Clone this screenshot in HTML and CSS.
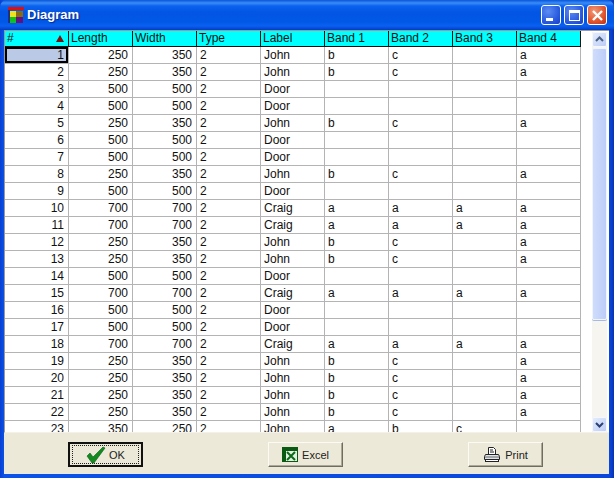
FILE: index.html
```html
<!DOCTYPE html>
<html lang="en">
<head>
<meta charset="utf-8">
<title>Diagram</title>
<link rel="stylesheet" href="styles.css">
</head>
<body>
<div class="window">
  <header class="titlebar">
    <svg class="app-icon" width="18" height="18" viewBox="0 0 18 18"><rect x="1" y="1" width="16" height="3" fill="#e01010"/><rect x="1" y="4" width="2" height="13" fill="#203080"/><rect x="3" y="5" width="6" height="6" fill="#f0e020"/><rect x="9" y="5" width="7" height="6" fill="#8a6a10"/><rect x="3" y="11" width="6" height="6" fill="#10c020"/><rect x="9" y="11" width="7" height="6" fill="#601080"/></svg>
    <span class="title">Diagram</span>
    <div class="caption-buttons">
      <span class="cap cap-blue"><svg width="19" height="19" viewBox="0 0 19 19"><rect x="4" y="12" width="7" height="3" fill="#fff"/></svg></span>
      <span class="cap cap-blue"><svg width="19" height="19" viewBox="0 0 19 19"><path d="M4 4h11v11H4z M5 7v7h9V7z" fill="#fff" fill-rule="evenodd"/></svg></span>
      <span class="cap cap-red"><svg width="19" height="19" viewBox="0 0 19 19"><path d="M5 5l9 9M14 5l-9 9" stroke="#fff" stroke-width="2.4" fill="none"/></svg></span>
    </div>
  </header>
  <div class="client">
    <div class="grid-area">
      <div class="table-clip">
        <table class="grid">
          <thead>
            <tr><th class="sorted"># <span class="sort-arrow"></span></th><th>Length</th><th>Width</th><th>Type</th><th>Label</th><th>Band 1</th><th>Band 2</th><th>Band 3</th><th>Band 4</th></tr>
          </thead>
          <tbody>
            <tr><td class="num selected">1</td><td class="num">250</td><td class="num">350</td><td>2</td><td>John</td><td>b</td><td>c</td><td></td><td>a</td></tr>
            <tr><td class="num">2</td><td class="num">250</td><td class="num">350</td><td>2</td><td>John</td><td>b</td><td>c</td><td></td><td>a</td></tr>
            <tr><td class="num">3</td><td class="num">500</td><td class="num">500</td><td>2</td><td>Door</td><td></td><td></td><td></td><td></td></tr>
            <tr><td class="num">4</td><td class="num">500</td><td class="num">500</td><td>2</td><td>Door</td><td></td><td></td><td></td><td></td></tr>
            <tr><td class="num">5</td><td class="num">250</td><td class="num">350</td><td>2</td><td>John</td><td>b</td><td>c</td><td></td><td>a</td></tr>
            <tr><td class="num">6</td><td class="num">500</td><td class="num">500</td><td>2</td><td>Door</td><td></td><td></td><td></td><td></td></tr>
            <tr><td class="num">7</td><td class="num">500</td><td class="num">500</td><td>2</td><td>Door</td><td></td><td></td><td></td><td></td></tr>
            <tr><td class="num">8</td><td class="num">250</td><td class="num">350</td><td>2</td><td>John</td><td>b</td><td>c</td><td></td><td>a</td></tr>
            <tr><td class="num">9</td><td class="num">500</td><td class="num">500</td><td>2</td><td>Door</td><td></td><td></td><td></td><td></td></tr>
            <tr><td class="num">10</td><td class="num">700</td><td class="num">700</td><td>2</td><td>Craig</td><td>a</td><td>a</td><td>a</td><td>a</td></tr>
            <tr><td class="num">11</td><td class="num">700</td><td class="num">700</td><td>2</td><td>Craig</td><td>a</td><td>a</td><td>a</td><td>a</td></tr>
            <tr><td class="num">12</td><td class="num">250</td><td class="num">350</td><td>2</td><td>John</td><td>b</td><td>c</td><td></td><td>a</td></tr>
            <tr><td class="num">13</td><td class="num">250</td><td class="num">350</td><td>2</td><td>John</td><td>b</td><td>c</td><td></td><td>a</td></tr>
            <tr><td class="num">14</td><td class="num">500</td><td class="num">500</td><td>2</td><td>Door</td><td></td><td></td><td></td><td></td></tr>
            <tr><td class="num">15</td><td class="num">700</td><td class="num">700</td><td>2</td><td>Craig</td><td>a</td><td>a</td><td>a</td><td>a</td></tr>
            <tr><td class="num">16</td><td class="num">500</td><td class="num">500</td><td>2</td><td>Door</td><td></td><td></td><td></td><td></td></tr>
            <tr><td class="num">17</td><td class="num">500</td><td class="num">500</td><td>2</td><td>Door</td><td></td><td></td><td></td><td></td></tr>
            <tr><td class="num">18</td><td class="num">700</td><td class="num">700</td><td>2</td><td>Craig</td><td>a</td><td>a</td><td>a</td><td>a</td></tr>
            <tr><td class="num">19</td><td class="num">250</td><td class="num">350</td><td>2</td><td>John</td><td>b</td><td>c</td><td></td><td>a</td></tr>
            <tr><td class="num">20</td><td class="num">250</td><td class="num">350</td><td>2</td><td>John</td><td>b</td><td>c</td><td></td><td>a</td></tr>
            <tr><td class="num">21</td><td class="num">250</td><td class="num">350</td><td>2</td><td>John</td><td>b</td><td>c</td><td></td><td>a</td></tr>
            <tr><td class="num">22</td><td class="num">250</td><td class="num">350</td><td>2</td><td>John</td><td>b</td><td>c</td><td></td><td>a</td></tr>
            <tr><td class="num">23</td><td class="num">350</td><td class="num">250</td><td>2</td><td>John</td><td>a</td><td>b</td><td>c</td><td></td></tr>
          </tbody>
        </table>
      </div>
      <div class="scrollbar">
        <div class="sb-btn"><svg width="15" height="15" viewBox="0 0 15 15"><path d="M4 9l3.5-3.5L11 9" stroke="#4d6185" stroke-width="2" fill="none"/></svg></div>
        <div class="sb-thumb"></div>
        <div class="sb-track"></div>
        <div class="sb-btn"><svg width="15" height="15" viewBox="0 0 15 15"><path d="M4 6l3.500 3.500L11 6" stroke="#2d4175" stroke-width="2" fill="none"/></svg></div>
      </div>
    </div>
    <footer class="footer">
      <button class="btn btn-default"><span class="focus-ring"><svg width="20" height="18" viewBox="0 0 20 18"><path d="M1 10l3-3 3 4L17 1l2 1L8 17H6z" fill="#138a20" stroke="#0b5a14" stroke-width=".6"/></svg><span>OK</span></span></button>
      <button class="btn"><svg width="16" height="15" viewBox="0 0 16 15"><rect x=".5" y=".5" width="15" height="14" fill="#e4f0e0" stroke="#0a5a14"/><rect x="1" y="1" width="14" height="3" fill="#0a5a14"/><rect x="1" y="1" width="3" height="13" fill="#0a5a14"/><path d="M5 5l8 8M13 5l-8 8" stroke="#0a6a18" stroke-width="2"/></svg><span>Excel</span></button>
      <button class="btn"><svg width="18" height="17" viewBox="0 0 18 17"><path d="M5.500 1.500h5l2 2v5h-7z" fill="#fff" stroke="#222"/><path d="M7 4h3M7 6h4" stroke="#222"/><path d="M2.500 8.500h13l1 2v3h-15v-3z" fill="#dfe3ea" stroke="#222"/><path d="M2 11h14" stroke="#666"/><rect x="2.500" y="13.500" width="13" height="2" fill="#fff" stroke="#222"/></svg><span>Print</span></button>
    </footer>
  </div>
</div>
</body>
</html>
```
FILE: styles.css
```css
* { box-sizing: border-box; }
html, body { margin: 0; padding: 0; }
body { width: 614px; height: 478px; overflow: hidden; font-family: "Liberation Sans", Arial, sans-serif; }
.window {
  width: 614px; height: 478px;
  display: flex; flex-direction: column;
  background: #0a3fd8;
  background: linear-gradient(90deg, #0a3fd0 0, #0a52e8 4px, #0a46dc 610px, #0831b0 614px);
}
.titlebar {
  height: 30px; flex: none;
  display: flex; align-items: center;
  padding: 0 7px 0 7px;
  background: linear-gradient(180deg, #0a55d8 0, #3a8cf8 3px, #0a62ee 6px, #0355e4 12px, #0258e6 22px, #0a60f0 26px, #0346d0 29px, #0336b8 30px);
  border-radius: 7px 7px 0 0;
}
.app-icon { margin-right: 2px; flex: none; }
.title { color: #fff; font: bold 13px/18px "Liberation Sans", Arial, sans-serif; text-shadow: 1px 1px 1px #0a2a90; }
.caption-buttons { margin-left: auto; display: flex; gap: 3px; }
.cap {
  width: 20px; height: 20px; display: block;
  border: 1px solid #fff; border-radius: 3px;
}
.cap svg { display: block; }
.cap-blue { background: radial-gradient(circle at 35% 30%, #5c8cf2 0, #2a5ce0 60%, #1a3fc0 100%); }
.cap-red { background: radial-gradient(circle at 35% 30%, #f09a78 0, #e0552c 60%, #c03010 100%); }
.client { flex: 1; margin: 0 5px 4px 4px; display: flex; flex-direction: column; background: #ece9d8; min-height: 0; }
.grid-area { flex: 1; min-height: 0; display: flex; background: #fff; border-left: 1px solid #9a9a9a; border-top: 1px solid #9a9a9a; border-bottom: 1px solid #f4f2e8; }
.table-clip { width: 587px; flex: none; overflow: hidden; background: #fff; }
.grid {
  border-collapse: separate; border-spacing: 0;
  table-layout: fixed; width: 576px;
  font-size: 12px; color: #111;
}
.grid th {
  width: 64px; height: 16px; padding: 0 2px;
  font-weight: normal; text-align: left;
  background: #00ffff;
  border-right: 1px solid #101010;
  border-bottom: 1px solid #101010;
  line-height: 15px; overflow: hidden; white-space: nowrap;
}
.grid th.sorted { position: relative; width: 64px; }
.sort-arrow {
  position: absolute; right: 4px; top: 4px;
  width: 0; height: 0;
  border-left: 4px solid transparent; border-right: 4px solid transparent;
  border-bottom: 7px solid #7a1010;
}
.grid td {
  height: 17px; padding: 0 3px;
  border-right: 1px solid #b4b4b4;
  border-bottom: 1px solid #b4b4b4;
  line-height: 16px; overflow: hidden; white-space: nowrap;
}
.grid td.num { text-align: right; padding-right: 4px; }
.grid td.selected { background: #b9c9e6; box-shadow: inset 0 0 0 2px #000; }
.scrollbar { width: 15px; flex: none; display: flex; flex-direction: column; background: #f6f5f0; margin-top: 1px; }
.sb-btn {
  width: 15px; height: 15px; flex: none;
  background: linear-gradient(135deg, #e4ecfc, #bccdf6);
  border: 1px solid #f4f7ff; border-radius: 2px;
}
.sb-btn svg { display: block; margin: -1px; }
.sb-thumb {
  height: 272px; flex: none; margin-top: 1px;
  background: linear-gradient(90deg, #cfdcfb, #bccdf8);
  border: 1px solid #f0f4ff; border-radius: 2px;
  box-shadow: 0 1px 0 #a8b8e0;
}
.sb-track { flex: 1; }
.footer {
  height: 41px; flex: none;
  display: flex; align-items: flex-start; gap: 125px;
  padding: 9px 0 0 64px;
  background: #ece9d8;
}
.btn {
  width: 75px; height: 25px; padding: 0;
  display: flex; align-items: center; justify-content: center; gap: 4px;
  font: 11px "Liberation Sans", Arial, sans-serif; color: #222;
  background: #ece9d8;
  border: 1px solid;
  border-color: #fbfaf4 #6f6d60 #6f6d60 #fbfaf4;
  box-shadow: inset -1px -1px 0 #aca899;
}
.btn-default { border: 2px solid #111; box-shadow: none; }
.focus-ring {
  width: 67px; height: 19px;
  display: flex; align-items: center; justify-content: center; gap: 3px;
  border: 1px dotted #222;
}
```
